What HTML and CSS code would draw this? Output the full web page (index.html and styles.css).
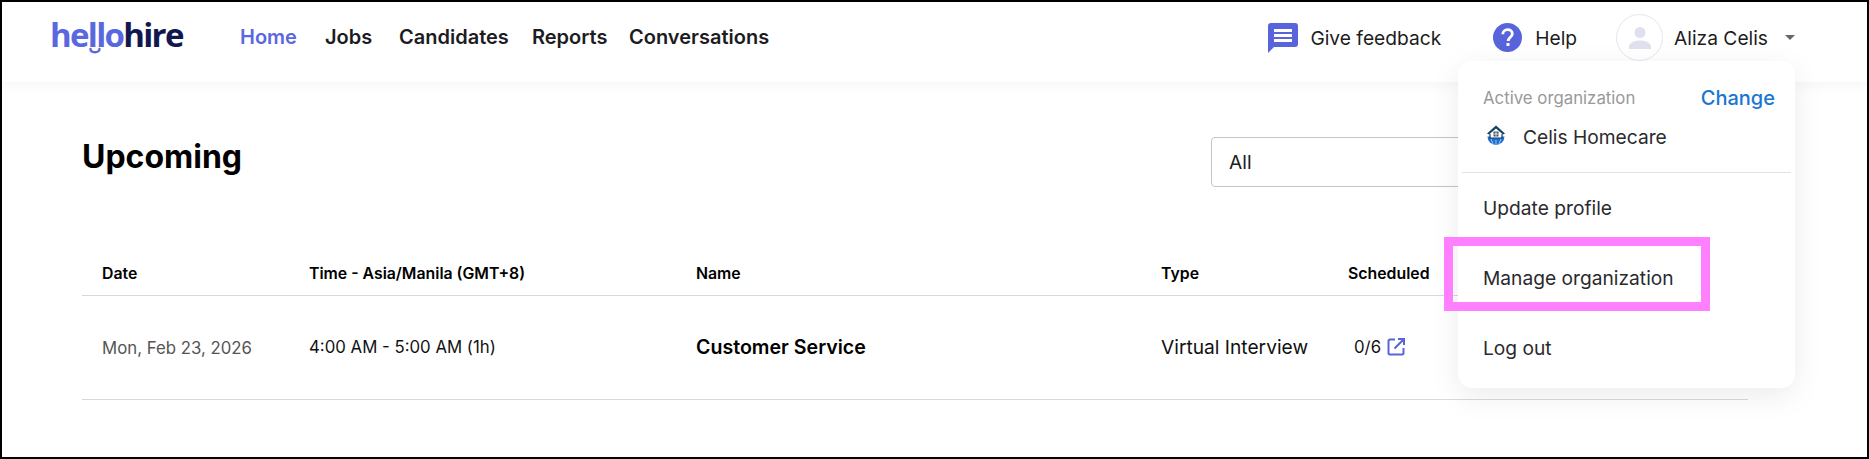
FILE: index.html
```html
<!DOCTYPE html>
<html lang="en">
<head>
<meta charset="utf-8">
<title>hellohire</title>
<link rel="stylesheet" href="styles.css">
</head>
<body>
<div class="frame">
  <header class="topbar">
    <a class="logo"><span class="logo-a">hello</span><span class="logo-b">hire</span>
      <svg class="logo-smile" width="14" height="8" viewBox="0 0 14 8"><path d="M2.500 3c0 2 2 3.200 4.500 3.200s4.500-1.200 4.500-3.200" fill="none" stroke="#5a68e0" stroke-width="2.400" stroke-linecap="round"/></svg>
    </a>
    <nav class="nav">
      <a class="nav-item active nav-home">Home</a>
      <a class="nav-item nav-jobs">Jobs</a>
      <a class="nav-item nav-cand">Candidates</a>
      <a class="nav-item nav-rep">Reports</a>
      <a class="nav-item">Conversations</a>
    </nav>
    <div class="actions">
      <a class="action action-fb">
        <svg width="30" height="30" viewBox="0 0 30 30"><path d="M3 0h24a3 3 0 0 1 3 3v18a3 3 0 0 1-3 3H6l-6 6V3a3 3 0 0 1 3-3z" fill="#5864dc"/><path d="M6 6h18v3H6zM6 11h18v3H6zM6 16h18v3H6z" fill="#fff"/></svg>
        <span>Give feedback</span>
      </a>
      <a class="action action-help">
        <svg width="29" height="29" viewBox="0 0 29 29"><circle cx="14.500" cy="14.500" r="14.500" fill="#5864dc"/><path d="M9.800 11.200c0-2.700 2-4.500 4.800-4.500s4.700 1.700 4.700 4c0 3.600-4.100 3.600-4.100 7.300" fill="none" stroke="#fff" stroke-width="2.800"/><rect x="13.500" y="20" width="3" height="3" fill="#fff"/></svg>
        <span>Help</span>
      </a>
      <a class="user">
        <span class="avatar">
          <svg width="24" height="24" viewBox="0 0 24 24"><circle cx="12" cy="6.500" r="5.500" fill="#dfe1ee"/><path d="M1 21c0-4.500 6-6.500 11-6.500s11 2 11 6.500v2H1z" fill="#dfe1ee"/></svg>
        </span>
        <span class="user-name">Aliza Celis</span>
        <span class="caret"></span>
      </a>
    </div>
  </header>

  <main class="content">
    <div class="title-row">
      <h1 class="title">Upcoming</h1>
      <div class="select">All</div>
    </div>
    <div class="table">
      <div class="row head">
        <div class="c-date">Date</div>
        <div class="c-time">Time - Asia/Manila (GMT+8)</div>
        <div class="c-name">Name</div>
        <div class="c-type">Type</div>
        <div class="c-sch">Scheduled</div>
      </div>
      <div class="row body-row">
        <div class="c-date date-val">Mon, Feb 23, 2026</div>
        <div class="c-time">4:00 AM - 5:00 AM (1h)</div>
        <div class="c-name name-val">Customer Service</div>
        <div class="c-type">Virtual Interview</div>
        <div class="c-sch sch-val">0/6
          <svg width="18" height="18" viewBox="0 0 18 18"><path d="M8 1.500H3A1.500 1.500 0 0 0 1.500 3v12A1.500 1.500 0 0 0 3 16.500h12a1.500 1.500 0 0 0 1.500-1.500v-5M11 1h6v6M16.500 1.500L7.500 10.500" fill="none" stroke="#5864dc" stroke-width="2"/></svg>
        </div>
      </div>
    </div>
  </main>

  <div class="menu">
    <div class="org">
      <div class="org-top"><span class="org-label">Active organization</span><a class="org-change">Change</a></div>
      <div class="org-current">
        <svg class="org-logo" width="20" height="21" viewBox="0 0 20 21"><path d="M1.500 11.500h17a8.500 8.500 0 0 1-17 0z" fill="#1f6fd6"/><path d="M10 15v5M5 14l2 5M15 14l-2 5" stroke="#bcd6f5" stroke-width=".8"/><path d="M10 .5L1 8.500l2 1 7-6 7 6 2-1z" fill="#17405c"/><path d="M4.500 9L10 4.500 15.500 9v4h-11z" fill="#fff"/><path d="M4 9v4h12V9" fill="none" stroke="#17405c" stroke-width="1.200"/><rect x="7.500" y="6.500" width="5" height="5" fill="#3d5566"/><path d="M10 6.500v5M7.500 9h5" stroke="#fff" stroke-width=".8"/></svg>
        <span>Celis Homecare</span>
      </div>
    </div>
    <a class="menu-item">Update profile</a>
    <a class="menu-item">Manage organization</a>
    <a class="menu-item">Log out</a>
  </div>
  <div class="highlight"></div>
</div>
</body>
</html>
```
FILE: styles.css
```css
* { box-sizing: border-box; }
html, body { margin: 0; height: 100%; }
body { font-family: Inter, "Liberation Sans", sans-serif; color: #1b1b1f; background: #fff; overflow: hidden; }
.frame { position: relative; height: 459px; border: 2px solid #000; overflow: hidden; }

.topbar { height: 80px; display: flex; align-items: flex-start; padding-left: 48px; background: #fff; box-shadow: 0 2px 14px rgba(0,0,0,.05); }
.logo { position: relative; display: block; width: 134px; margin-top: 13px; font-family: "Open Sans", sans-serif; font-size: 33px; font-weight: 700; line-height: 40px; letter-spacing: -1.700px; white-space: nowrap; }
.logo-a { color: #5a68e0; }
.logo-b { color: #12184f; }
.logo-smile { position: absolute; left: 38px; top: 31px; }

.nav { display: flex; margin-left: 56px; margin-top: 23px; font-size: 20px; font-weight: 600; line-height: 24px; color: #1c1c22; }
.nav-item { display: block; }
.nav-home { width: 85px; }
.nav-jobs { width: 74px; }
.nav-cand { width: 133px; }
.nav-rep { width: 97px; }
.active { color: #5b67e0; }

.actions { margin-left: auto; display: flex; align-items: center; height: 47px; margin-top: 12px; padding-right: 72px; font-size: 19.200px; color: #1c1c22; }
.action { display: flex; align-items: center; }
.action-fb { gap: 12px; margin-right: 52px; }
.action-help { gap: 13px; margin-right: 39px; }
.user { display: flex; align-items: center; }
.avatar { width: 47px; height: 47px; border: 1px solid #e5e5ee; border-radius: 50%; display: flex; align-items: center; justify-content: center; }
.user-name { margin-left: 11px; }
.caret { width: 0; height: 0; margin-left: 17px; border-left: 5px solid transparent; border-right: 5px solid transparent; border-top: 5px solid #666; }

.content { padding: 0 119px 0 80px; }
.title-row { position: relative; height: 134px; }
.title { margin: 0; padding-top: 55px; font-size: 32px; line-height: 40px; font-weight: 700; color: #000; }
.select { position: absolute; left: 1129px; top: 55px; width: 400px; height: 50px; padding-left: 17px; border: 1px solid #c4c4c4; border-radius: 4px; font-size: 19.200px; line-height: 48px; }

.row { display: flex; align-items: center; border-bottom: 1px solid #d9d9d9; }
.head { height: 80px; align-items: flex-end; padding-bottom: 10px; font-size: 15.840px; line-height: 22px; font-weight: 600; color: #000; }
.body-row { height: 104px; padding-bottom: 2px; font-size: 19.200px; color: #111; }
.c-date { width: 227px; padding-left: 20px; }
.c-time { width: 387px; }
.c-name { width: 465px; }
.c-type { width: 187px; }
.date-val { padding-top: 2px; font-size: 16.800px; color: #555; }
.body-row .c-time { font-size: 16.800px; }
.name-val { font-size: 19.600px; font-weight: 600; color: #000; }
.sch-val { display: flex; align-items: center; gap: 6px; padding-left: 6px; font-size: 16.800px; }
.head .c-sch, .head .c-name { white-space: nowrap; }

.menu { position: absolute; left: 1456px; top: 59px; width: 337px; height: 327px; padding: 0 4px; background: #fff; border-radius: 14px; box-shadow: 0 8px 30px rgba(0,0,0,.08); font-size: 19.200px; color: #2a2a2e; }
.org { height: 112px; padding: 25px 16px 0 21px; border-bottom: 1px solid #e2e2e2; }
.org-top { display: flex; align-items: center; justify-content: space-between; height: 24px; }
.org-label { font-size: 16.800px; color: #999; }
.org-change { font-size: 20px; font-weight: 500; color: #1976d2; }
.org-current { display: flex; align-items: center; gap: 17px; margin-top: 15px; padding-left: 3px; }
.org-logo { margin-top: -4px; }
.menu-item { display: block; height: 70px; padding-left: 21px; line-height: 70px; }

.highlight { position: absolute; left: 1442px; top: 235px; width: 266px; height: 74px; border: 9px solid #ff80ff; }
```
